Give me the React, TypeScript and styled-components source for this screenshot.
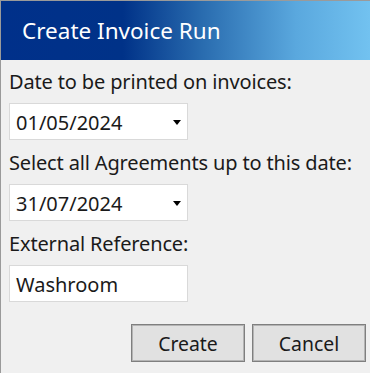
import React from "react";
import styled, { createGlobalStyle } from "styled-components";

const Global = createGlobalStyle`
  html, body { margin: 0; padding: 0; background: #f0f0f0; }
  body { font-family: "Segoe UI", "Noto Sans", "Open Sans", sans-serif; }
`;

const Dialog = styled.div`
  width: 370px;
  height: 373px;
  box-sizing: border-box;
  border-top: 1px solid #9a9a9a;
  border-left: 1px solid #9a9a9a;
  background: #f0f0f0;
  display: flex;
  flex-direction: column;
`;

const Header = styled.div`
  height: 59px;
  display: flex;
  align-items: center;
  padding-left: 21px;
  background: linear-gradient(90deg, #00308a 0%, #003288 33%, #2a6db0 55%, #5aa8de 80%, #72c2f0 100%);
  color: #ffffff;
  font-size: 22.5px;
`;

const Body = styled.div`
  display: flex;
  flex-direction: column;
  padding: 8px 0 0 8px;
`;

const Label = styled.div`
  font-size: 20px;
  color: #1a1a1a;
  line-height: 27px;
  height: 27px;
  letter-spacing: -0.15px;
  white-space: nowrap;
`;

const Field = styled.div<{ $gap: number }>`
  margin-top: 8px;
  margin-bottom: ${(p) => p.$gap}px;
  width: 179px;
  height: 37px;
  box-sizing: border-box;
  background: #ffffff;
  border: 1px solid #d9d9d9;
  display: flex;
  align-items: center;
  justify-content: space-between;
  padding: 2px 5px 0 6px;
  font-size: 20px;
  color: #1a1a1a;
`;

const Arrow = styled.span`
  width: 0;
  height: 0;
  margin-right: 1px;
  border-left: 4.5px solid transparent;
  border-right: 4.5px solid transparent;
  border-top: 5px solid #000;
`;

const ButtonRow = styled.div`
  display: flex;
  justify-content: flex-end;
  gap: 7px;
  padding-right: 4px;
  margin-top: 22px;
`;

const Button = styled.button`
  width: 114px;
  height: 38px;
  box-sizing: border-box;
  background: #e1e1e1;
  border: 1px solid #7f7f7f;
  box-shadow: inset 0 0 0 1px #b4b4b4;
  font-family: inherit;
  font-size: 19.4px;
  color: #1a1a1a;
  padding: 0;
`;

export default function App() {
  return (
    <>
      <Global />
      <Dialog>
        <Header>Create Invoice Run</Header>
        <Body>
          <Label>Date to be printed on invoices:</Label>
          <Field $gap={9}>
            <span>01/05/2024</span>
            <Arrow />
          </Field>
          <Label>Select all Agreements up to this date:</Label>
          <Field $gap={9}>
            <span>31/07/2024</span>
            <Arrow />
          </Field>
          <Label>External Reference:</Label>
          <Field $gap={0}>
            <span>Washroom</span>
          </Field>
          <ButtonRow>
            <Button>Create</Button>
            <Button>Cancel</Button>
          </ButtonRow>
        </Body>
      </Dialog>
    </>
  );
}
